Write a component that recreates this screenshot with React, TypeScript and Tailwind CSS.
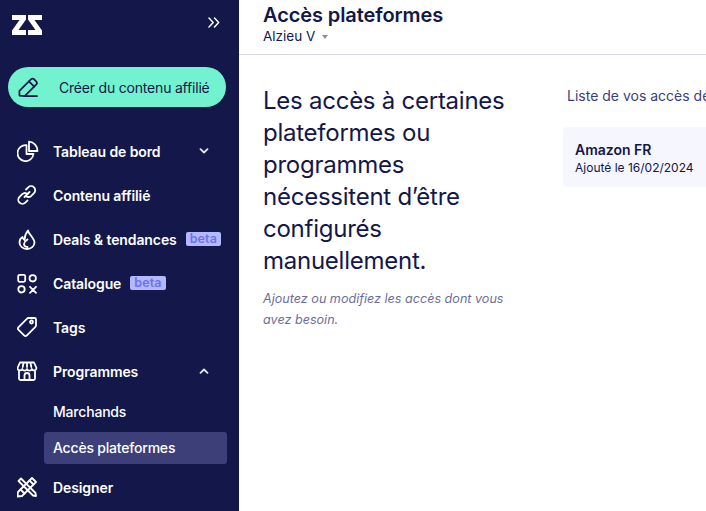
import { ReactNode } from "react";

const stroke = {
  fill: "none",
  stroke: "currentColor",
  strokeWidth: 1.8,
  strokeLinecap: "round" as const,
  strokeLinejoin: "round" as const,
};

function Ico({ children }: { children: ReactNode }) {
  return (
    <svg viewBox="0 0 22 22" className="h-[22px] w-[22px] shrink-0 text-white" {...stroke}>
      {children}
    </svg>
  );
}

const icons = {
  pie: (
    <Ico>
      <path d="M9.500 5.200A8 8 0 1 0 16.500 14H9.500z" />
      <path d="M12 1.700A9 9 0 0 1 20.500 11H12z" />
    </Ico>
  ),
  link: (
    <Ico>
      <path d="M7.500 13l5-5" />
      <path d="M9 5.500l2.200-2.200a4 4 0 0 1 5.800 5.800l-2.700 2.700a4 4 0 0 1-5.400 0" />
      <path d="M10.500 16.500l-2.200 2.200a4 4 0 0 1-5.800-5.800l2.700-2.700a4 4 0 0 1 5.400 0" />
    </Ico>
  ),
  flame: (
    <Ico>
      <path d="M11 2.500c.5 3 2.500 4 4 6.500 1.200 1.800 2.500 3.500 2.500 5.500a7.500 6.500 0 0 1-15 0c0-2.500 1.300-4.500 3-5.500.2 1.500 1 2.500 2 3 0-3.500 1.500-7 3.500-9.500z" />
      <path d="M10.500 19c-2 0-3.500-1.400-3.500-3.200 0-1.800 1.500-2.800 3.500-4.300" />
    </Ico>
  ),
  apps: (
    <Ico>
      <rect x="1.200" y="2.800" width="7" height="7" rx="1.500" />
      <circle cx="15.700" cy="6.300" r="3.200" />
      <circle cx="4.500" cy="17.300" r="3.200" />
      <path d="M13 14.800l6 6M19 14.800l-6 6" />
    </Ico>
  ),
  tag: (
    <Ico>
      <g transform="translate(-1 -.5)">
        <path d="M12.500 2.500h6a1.500 1.500 0 0 1 1.500 1.500v6a2 2 0 0 1-.6 1.400l-8.500 8.500a2 2 0 0 1-2.800 0l-5.500-5.500a2 2 0 0 1 0-2.800l8.500-8.500a2 2 0 0 1 1.400-.6z" />
        <circle cx="15.500" cy="6.500" r="1.500" />
      </g>
    </Ico>
  ),
  store: (
    <Ico>
      <g transform="translate(-1 0)">
        <path d="M4 2.500h14l2.500 5.500a2.500 2.500 0 0 1-4.750 1 2.500 2.500 0 0 1-4.750 0 2.500 2.500 0 0 1-4.750 0A2.500 2.500 0 0 1 1.500 8z" />
        <path d="M3 11v7.500a1.500 1.500 0 0 0 1.500 1.500h13a1.500 1.500 0 0 0 1.500-1.500V11" />
        <path d="M8.500 20v-4.500a2.500 2.500 0 0 1 5 0V20" />
        <path d="M7.500 3l-.8 4M11 3v4M14.500 3l.8 4" />
      </g>
    </Ico>
  ),
  design: (
    <Ico>
      <g transform="translate(-1 0)">
        <path d="M5 2.500l14.500 14.500.5 3-3-.5L2.500 5z" />
        <path d="M16 2l4 4-14 14-4.500.5.500-4.500z" />
        <path d="M13.500 4.500l4 4M4.500 13.500l4 4" />
      </g>
    </Ico>
  ),
};

function Beta() {
  return (
    <span className="ml-[9px] rounded-[2px] bg-[#b4b8fc] px-1 text-[12.5px] leading-[14px] font-semibold tracking-[0.1px] text-[#6c72f0]">
      beta
    </span>
  );
}

function Chevron({ up }: { up?: boolean }) {
  return (
    <svg viewBox="0 0 10 6" className="mr-[27px] ml-auto h-[6px] w-[10px]" fill="none" stroke="#e6e6ee" strokeWidth="1.8" strokeLinecap="round" strokeLinejoin="round">
      <path d={up ? "M1.500 4.800L5 1.500l3.500 3.300" : "M1.500 1.200L5 4.500l3.500-3.300"} />
    </svg>
  );
}

function NavRow({ icon, label, beta, chevron }: { icon: ReactNode; label: string; beta?: boolean; chevron?: "up" | "down" }) {
  return (
    <div className="flex h-[44px] items-center pr-[3px] pl-[17px]">
      {icon}
      <span className="ml-[14px] text-[14px] font-semibold tracking-[-0.1px] text-white">{label}</span>
      {beta && <Beta />}
      {chevron && <Chevron up={chevron === "up"} />}
    </div>
  );
}

export default function App() {
  return (
    <div className="flex h-[511px] w-[706px] overflow-hidden bg-white font-['Inter',sans-serif] text-[#13174a]">
      <aside className="flex w-[239px] shrink-0 flex-col overflow-hidden bg-[#13174a]">
        <div className="flex h-[67px] shrink-0 items-start justify-between pt-[15px] pr-[19px] pl-[12px]">
          <svg viewBox="0 0 30 20" className="h-[20px] w-[30px]" fill="#ffffff">
            <path d="M0 0h14v4.500L6.500 15H14v5H0v-4.500L7.500 5H0z" />
            <path d="M16 0h14v5h-7.500L30 15.500V20H16v-5h7.500L16 4.500z" />
          </svg>
          <svg viewBox="0 0 12 11" className="mt-[2px] h-[11px] w-[12px]" fill="none" stroke="#ffffff" strokeWidth="1.500" strokeLinecap="round" strokeLinejoin="round">
            <path d="M1 1l4.200 4.500L1 10M6.500 1l4.200 4.500L6.500 10" />
          </svg>
        </div>

        <div className="mx-[8px] flex h-[40px] w-[218px] shrink-0 items-center rounded-full bg-[#72f2ce] pl-[10px]">
          <svg viewBox="0 0 22 22" className="h-[21px] w-[21px] text-[#13174a]" {...stroke}>
            <path d="M1.500 19.500v-5L13.500 2.500a2.500 2.500 0 0 1 3.500 0l2 2a2.500 2.500 0 0 1 0 3.500L7 20z" />
            <path d="M7 20h13" />
            <path d="M11.500 4.500l5.500 5.500" />
          </svg>
          <span className="ml-[20px] text-[14px] tracking-[-0.2px] text-[#13174a]">Créer du contenu affilié</span>
        </div>

        <nav className="mt-[22px] flex flex-col">
          <NavRow icon={icons.pie} label="Tableau de bord" chevron="down" />
          <NavRow icon={icons.link} label="Contenu affilié" />
          <NavRow icon={icons.flame} label="Deals & tendances" beta />
          <NavRow icon={icons.apps} label="Catalogue" beta />
          <NavRow icon={icons.tag} label="Tags" />
          <NavRow icon={icons.store} label="Programmes" chevron="up" />
          <div className="flex h-[36px] items-center pl-[53px] text-[14px] font-medium tracking-[-0.2px] text-white">Marchands</div>
          <div className="mt-[3px] ml-[44px] flex h-[32px] w-[183px] items-center rounded-[3px] bg-[#3c3f78] pb-[2px] pl-[9px] text-[14px] font-medium tracking-[-0.2px] text-white">
            Accès plateformes
          </div>
          <div className="mt-[1px]">
            <NavRow icon={icons.design} label="Designer" />
          </div>
        </nav>
      </aside>

      <main className="flex min-w-0 flex-1 flex-col">
        <header className="h-[55px] shrink-0 border-b border-[#d8d8e2] pl-[24px]">
          <h1 className="pt-[3px] text-[20px] leading-[25px] font-semibold tracking-[-0.1px]">Accès plateformes</h1>
          <div className="flex items-center text-[13.5px] leading-[17px]">
            Alzieu V
            <span className="ml-[7px] h-0 w-0 border-x-[3px] border-t-[4px] border-x-transparent border-t-[#8b8da8]" />
          </div>
        </header>

        <div className="flex min-w-0 flex-1">
          <section className="w-[300px] shrink-0 pt-[30px] pl-[24px]">
            <p className="text-[24px] leading-[32px] tracking-[-0.25px]">
              Les accès à certaines
              <br />
              plateformes ou
              <br />
              programmes
              <br />
              nécessitent d’être
              <br />
              configurés
              <br />
              manuellement.
            </p>
            <p className="mt-[11px] text-[12.6px] leading-[21px] text-[#6c6e9a] italic">
              Ajoutez ou modifiez les accès dont vous
              <br />
              avez besoin.
            </p>
          </section>

          <section className="min-w-0 flex-1 overflow-hidden pt-[31px]">
            <p className="pl-[28px] text-[14px] leading-[20px] whitespace-nowrap text-[#3c3f78]">Liste de vos accès déjà configurés</p>
            <div className="mt-[21px] ml-[24px] h-[60px] w-[200px] rounded-[4px] bg-[#f6f6fe] pt-[13px] pl-[12px]">
              <div className="text-[14px] leading-[20px] font-semibold">Amazon FR</div>
              <div className="text-[12px] leading-[16px] whitespace-nowrap">Ajouté le 16/02/2024</div>
            </div>
          </section>
        </div>
      </main>
    </div>
  );
}
